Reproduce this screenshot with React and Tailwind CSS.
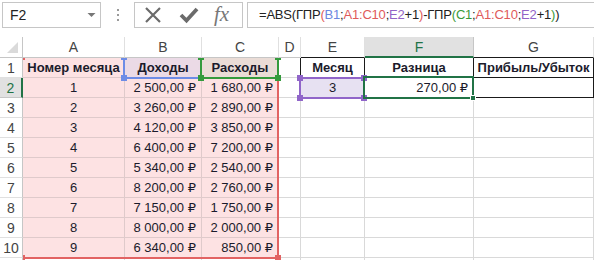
import React from "react";

const F = { fontFamily: '"Liberation Sans", "DejaVu Sans", sans-serif' };

const rows = [
  ["Номер месяца", "Доходы", "Расходы", "", "Месяц", "Разница", "Прибыль/Убыток"],
  ["1", "2 500,00 ₽", "1 680,00 ₽", "", "3", "270,00 ₽", ""],
  ["2", "3 260,00 ₽", "2 890,00 ₽", "", "", "", ""],
  ["3", "4 120,00 ₽", "3 850,00 ₽", "", "", "", ""],
  ["4", "6 400,00 ₽", "7 200,00 ₽", "", "", "", ""],
  ["5", "5 340,00 ₽", "2 540,00 ₽", "", "", "", ""],
  ["6", "8 200,00 ₽", "2 760,00 ₽", "", "", "", ""],
  ["7", "7 150,00 ₽", "1 750,00 ₽", "", "", "", ""],
  ["8", "8 000,00 ₽", "2 000,00 ₽", "", "", "", ""],
  ["9", "6 340,00 ₽", "850,00 ₽", "", "", "", ""],
  ["", "", "", "", "", "", ""],
];

const cols = ["A", "B", "C", "D", "E", "F", "G"];

function cellClass(r, c) {
  let bg = "bg-white";
  let border = "border-[#d9d9d9]";
  if (c <= 2 && r <= 9) {
    bg = "bg-[#fde2e3]";
    border = "border-[#dfcacb]";
    if (r === 0 && c === 1) bg = "bg-[#ebdae6]";
    if (r === 0 && c === 2) bg = "bg-[#eadcd6]";
  }
  if (r === 1 && c === 4) bg = "bg-[#e7e1f2]";
  let extra = "";
  if (r <= 1 && c >= 4) border = "border-[#1a1a1a]";
  if (r <= 1 && c === 3) extra = "border-r-[#1a1a1a]";
  return `${bg} ${border} ${extra}`;
}

function Cell({ r, c, v }) {
  const bold = r === 0 && v !== "";
  let align = "justify-center";
  if (r > 0 && (c === 1 || c === 2 || c === 5)) align = "justify-end pr-[5px]";
  return (
    <div
      className={`flex items-center border-r border-b ${align} ${cellClass(r, c)} text-[13px] text-[#1b1b2b] overflow-visible whitespace-nowrap pt-[1px] ${bold ? "font-bold" : ""}`}
    >
      {v}
    </div>
  );
}

function Sq({ x, y, color }) {
  return (
    <div
      className="absolute w-[6px] h-[6px]"
      style={{ left: x - 3, top: y - 3, background: color }}
    />
  );
}

export default function App() {
  const red = "#e26363";
  const blue = "#6e8ce6";
  const green = "#349a3c";
  const purple = "#9065c9";
  return (
    <div className="relative w-[594px] h-[260px] overflow-hidden bg-white" style={F}>
      {/* Formula bar */}
      <div className="h-[37px] flex items-start pt-[2px] pl-[2px] gap-0">
        <div className="w-[99px] h-[26px] border border-[#c6c6c6] flex items-center justify-between pl-[7px] pr-[3px]">
          <span className="text-[14px] text-[#222]">F2</span>
          <svg width="9" height="6" viewBox="0 0 9 6" className="mr-[1px]">
            <polygon points="0.5,1 8.5,1 4.5,5" fill="#777" />
          </svg>
        </div>
        <div className="w-[33px] h-[26px] flex flex-col items-center justify-center gap-[3px]">
          <div className="w-[2px] h-[2px] bg-[#9a9a9a]" />
          <div className="w-[2px] h-[2px] bg-[#9a9a9a]" />
          <div className="w-[2px] h-[2px] bg-[#9a9a9a]" />
        </div>
        <div className="w-[109px] h-[26px] border border-[#c6c6c6] flex items-center">
          <svg width="18" height="18" viewBox="0 0 18 18" className="ml-[9px]">
            <path d="M2 2 L16 16 M16 2 L2 16" stroke="#6b6b6b" strokeWidth="2.2" fill="none" />
          </svg>
          <svg width="20" height="18" viewBox="0 0 20 18" className="ml-[17px]">
            <path d="M2 9 L7.5 14.5 L18 3" stroke="#6b6b6b" strokeWidth="3.8" fill="none" />
          </svg>
          <span
            className="ml-[15px] text-[21px] italic text-[#777] leading-none -mt-[2px]"
            style={{ fontFamily: '"Liberation Serif", "DejaVu Serif", serif' }}
          >
            fx
          </span>
        </div>
        <div className="ml-[4px] flex-1 h-[26px] border border-[#c6c6c6] border-r-0 flex items-center pl-[11px] text-[13px] tracking-[-0.2px] text-[#222] whitespace-nowrap">
          <span>=ABS(ГПР</span>
          <span className="text-[#e05a5a]">(</span>
          <span className="text-[#6c87e0]">B1</span>
          <span>;</span>
          <span className="text-[#e05a5a]">A1:C10</span>
          <span>;</span>
          <span className="text-[#9163c7]">E2</span>
          <span>+1</span>
          <span className="text-[#e05a5a]">)</span>
          <span>-ГПР</span>
          <span className="text-[#3a9a3a]">(</span>
          <span className="text-[#3a9a3a]">C1</span>
          <span>;</span>
          <span className="text-[#e05a5a]">A1:C10</span>
          <span>;</span>
          <span className="text-[#9163c7]">E2</span>
          <span>+1</span>
          <span className="text-[#3a9a3a]">)</span>
          <span>)</span>
        </div>
      </div>

      {/* Sheet grid */}
      <div className="grid grid-cols-[23px_102px_77px_77px_22px_64px_109px_1fr] grid-rows-[21px_repeat(11,20px)]">
        <div className="relative border-r border-b border-[#c6c6c6] bg-white">
          <svg width="12" height="12" viewBox="0 0 12 12" className="absolute left-[7px] top-[5px]">
            <polygon points="11,0 11,11 0,11" fill="#dadada" />
          </svg>
        </div>
        {cols.map((c) => (
          <div
            key={c}
            className={`flex items-center justify-center text-[14px] pt-[1px] border-r ${
              c === "F"
                ? "bg-[#e1e1e1] text-[#217346] border-b-2 border-b-[#217346] border-r-[#c6c6c6]"
                : c === "E" || c === "G"
                ? "bg-white text-[#444] border-b border-b-[#1a1a1a] border-r-[#e0e0e0]"
                : "bg-white text-[#444] border-b border-b-[#c6c6c6] border-r-[#e0e0e0]"
            }`}
          >
            {c}
          </div>
        ))}
        {rows.map((row, r) => (
          <React.Fragment key={r}>
            <div
              className={`flex items-center justify-center text-[14px] pt-[1px] border-b ${
                r === 1
                  ? "bg-[#e1e1e1] text-[#217346] border-r-2 border-r-[#217346] border-b-[#c6c6c6]"
                  : "bg-white text-[#444] border-r border-r-[#c6c6c6] border-b-[#e0e0e0]"
              }`}
            >
              {r < 10 ? r + 1 : ""}
            </div>
            {row.map((v, c) => (
              <Cell key={c} r={r} c={c} v={v} />
            ))}
          </React.Fragment>
        ))}
      </div>

      {/* Range highlight overlays (clipped to the cell area) */}
      <div className="absolute left-[23px] top-[58px] right-0 bottom-0 overflow-hidden pointer-events-none">
        <div className="absolute left-[-23px] top-[-58px] w-[594px] h-[260px]">
          <div className="absolute left-[21px] top-[56px] w-[258px] h-[203px] border-2 border-[#e26363]" />
          <Sq x={22} y={57} color={red} />
          <Sq x={278} y={57} color={red} />
          <Sq x={22} y={258} color={red} />
          <Sq x={278} y={258} color={red} />
          <div className="absolute left-[123px] top-[56px] w-[79px] h-[23px] border-2 border-[#6e8ce6]" />
          <Sq x={124} y={57} color={blue} />
          <Sq x={124} y={78} color={blue} />
          <div className="absolute left-[200px] top-[56px] w-[79px] h-[23px] border-2 border-[#349a3c]" />
          <Sq x={201} y={57} color={green} />
          <Sq x={201} y={78} color={green} />
          <Sq x={278} y={78} color={green} />
          <Sq x={278} y={57} color={green} />
          <div className="absolute left-[299px] top-[77px] w-[66px] h-[22px] border-2 border-[#9065c9]" />
          <Sq x={300} y={78} color={purple} />
          <Sq x={364} y={78} color={purple} />
          <Sq x={300} y={98} color={purple} />
          <Sq x={364} y={98} color={purple} />
          <div className="absolute left-[363px] top-[76px] w-[111px] h-[23px] border-2 border-[#217346]" />
          <div className="absolute left-[470px] top-[95px] w-[6px] h-[6px] bg-[#217346] border border-white" />
        </div>
      </div>
    </div>
  );
}
